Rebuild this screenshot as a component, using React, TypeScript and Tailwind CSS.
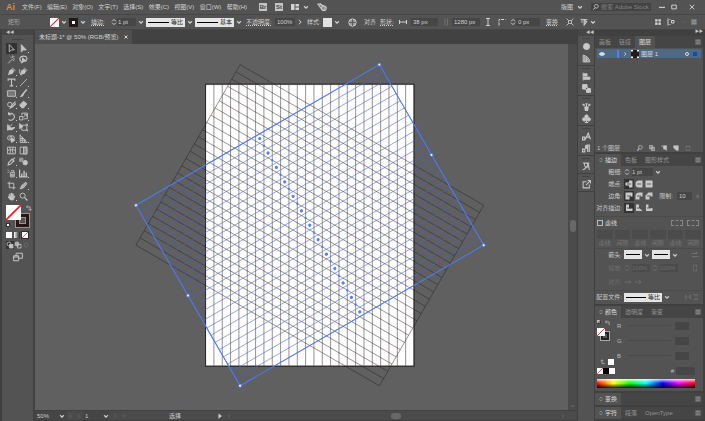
import { useState, type ReactNode } from 'react'

const menus = ['文件(F)', '编辑(E)', '对象(O)', '文字(T)', '选择(S)', '效果(C)', '视图(V)', '窗口(W)', '帮助(H)']

function Icon({ children, className = 'w-2.5 h-2.5' }: { children: ReactNode; className?: string }) {
  return (
    <svg viewBox="0 0 16 16" className={`shrink-0 ${className}`} fill="none" stroke="currentColor" strokeWidth={1.6} aria-hidden="true">
      {children}
    </svg>
  )
}

function Chevron({ className = 'w-1.5 h-1.5' }: { className?: string }) {
  return <Icon className={className}><path d="M3 6l5 5 5-5" strokeWidth={3.2} /></Icon>
}

function Stepper() {
  return <Icon className="w-1.5 h-2.5"><path d="M3 6l5-5 5 5M3 10l5 5 5-5" strokeWidth={2.4} /></Icon>
}

function Burger() {
  return (
    <button aria-label="面板菜单" className="ml-auto mr-0.5 text-[#bdbdbd]">
      <Icon className="w-1.5 h-1.5"><path d="M1 3h14M1 8h14M1 13h14" strokeWidth={2} /></Icon>
    </button>
  )
}

function NoneSwatch({ className }: { className: string }) {
  return (
    <svg viewBox="0 0 16 16" className={`shrink-0 bg-white ${className}`} aria-hidden="true">
      <path d="M0 16L16 0" stroke="#f01820" strokeWidth={1.8} />
    </svg>
  )
}

function LineSelect({ label, value, className }: { label: string; value?: string; className: string }) {
  return (
    <label className="flex items-center gap-0.5 shrink-0">
      <span className={`flex items-center h-[9px] px-0.5 bg-[#e4e4e4] text-[#222] ${className}`}>
        <span className="flex-1 h-px bg-black" />
        <select aria-label={label} className={value ? 'w-3.5 pl-0.5 appearance-none outline-none' : 'w-0 appearance-none outline-none'}>
          <option>{value}</option>
        </select>
      </span>
      <Chevron />
    </label>
  )
}

/* Toolbar glyphs, two columns */
const pen = <><path d="M2 14l2-8 5-3 4 4-3 5z" fill="currentColor" stroke="none" /><path d="M9 1l6 6M2 14l5-5" /></>
const toolGroups: { name: string; more?: boolean; icon: ReactNode }[][] = [
  [
    { name: '选择', icon: <path d="M4 1v13l3.6-3.4H13z" /> },
    { name: '直接选择', more: true, icon: <path d="M4 1v13l3.6-3.4H13z" fill="currentColor" /> },
    { name: '魔棒', icon: <path d="M2 15L10 7M10 1v4M14 7h-3M13 2l-2 2M6 3l2 2M13 11l-2-2" /> },
    { name: '套索', icon: <><path d="M5 12C-1 9 1 2 8 2s8 6 3 8" strokeWidth={2} /><path d="M6 5v9l3-3h4zM5 12q-2 1-1 3" fill="currentColor" /></> },
  ],
  [
    { name: '钢笔', more: true, icon: pen },
    { name: '曲率', icon: <>{pen}<path d="M1 4q-1 8 3 11" /></> },
    { name: '文字', more: true, icon: <path d="M2 5V2h12v3M8 2v12M5 14h6" strokeWidth={2} /> },
    { name: '直线段', more: true, icon: <path d="M2 14L14 2" /> },
    { name: '矩形', more: true, icon: <path d="M1 3h14v10H1z" fill="#777" /> },
    { name: '画笔', more: true, icon: <><path d="M14 1L7 9" strokeWidth={2.6} /><path d="M7 8q-3 0-3 3l-3 3q6 1 8-4z" fill="currentColor" stroke="none" /></> },
    { name: 'Shaper', more: true, icon: <><circle cx="5" cy="8" r="4" /><path d="M15 3L8 10l-2 4 4-2 6-6" strokeWidth={2} /></> },
    { name: '橡皮擦', more: true, icon: <path d="M1 9l7-7 6 5-6 7H5z" fill="currentColor" /> },
  ],
  [
    { name: '旋转', more: true, icon: <path d="M3 4a6 6 0 1 1 0 9M3 0v5h5" strokeWidth={1.8} /> },
    { name: '比例缩放', more: true, icon: <path d="M1 8h6v6H1zM5 6V2h10v10H9M8 9l5-5M9 4h4v4" /> },
    { name: '宽度', more: true, icon: <><path d="M1 3v10l4-5 3 3 6-3M1 3l5 3 3-4" /><path d="M2 5l5 4 7-1-5 4H2z" fill="currentColor" /></> },
    { name: '自由变换', icon: <><path d="M5 4h9v9H5zM12 2h3v3M12 12h3v3" /><path d="M1 1v9l6-4z" fill="currentColor" /></> },
    { name: '形状生成器', more: true, icon: <><circle cx="5" cy="7" r="4" /><circle cx="9" cy="7" r="4" /><path d="M8 7v8l6-4z" fill="currentColor" /></> },
    { name: '透视网格', more: true, icon: <path d="M2 1v14h12L2 2M6 5v10M10 9v6M2 8h7M2 11h10" /> },
  ],
  [
    { name: '网格', icon: <path d="M1 2h14v12H1zM1 8q7-4 14 0M5 2q3 6 0 12M11 2q-3 6 0 12" /> },
    { name: '渐变', icon: <><path d="M2 2h12v12H2z" /><path d="M8 2h6v12H8z" fill="#8f8f8f" /></> },
    { name: '吸管', more: true, icon: <path d="M2 14l1-4 6-6 3 3-6 6zM8 3l5 5M10 5l4-4" strokeWidth={2} /> },
    { name: '混合', icon: <><circle cx="11" cy="10" r="4" fill="currentColor" /><path d="M1 2h6v6H1z" fill="#999" stroke="#999" /></> },
  ],
  [
    { name: '符号喷枪', more: true, icon: <path d="M6 6h7v8H6zM7 3h5v3M1 2h2M4 4h1M1 6h2M8 9h3v3H8z" /> },
    { name: '柱形图', more: true, icon: <path d="M1 1v13h14M5 14V8M9 14V3M13 14V6" strokeWidth={2.4} /> },
  ],
  [
    { name: '画板', icon: <path d="M4 1v11h11M1 4h11v11" /> },
    { name: '切片', more: true, icon: <path d="M2 14l3-6 7-6 2 3-6 7zM5 8l4 4" fill="#aaa" /> },
    { name: '抓手', more: true, icon: <path d="M4 8V4h1v4h2V2h1v6h2V3h1v6l3-2-3 7H6L2 9z" fill="currentColor" /> },
    { name: '缩放', icon: <><circle cx="6.5" cy="6.5" r="4.5" /><path d="M10 10l5 5" strokeWidth={2.2} /></> },
  ],
]

const dockGroups: { name: string; icon: ReactNode }[][] = [
  [
    { name: '颜色参考', icon: <circle cx="8" cy="8" r="5.5" fill="currentColor" /> },
    { name: '色板', icon: <path d="M2 2v12h12Q12 4 2 2M5 4v10M8 6v8M5 14L12 8" fill="#8b8b8b" /> },
  ],
  [
    { name: '对齐', icon: <><path d="M2 1v14" /><path d="M3 3h6v4H3zM3 9h11v4H3z" fill="currentColor" /></> },
    { name: '路径查找器', icon: <><path d="M1 1h8v8H1zM8 8h7v7H8z" fill="currentColor" /><path d="M6 6h4v4H6z" fill="#535353" /></> },
  ],
  [
    { name: '画笔', icon: <path d="M5 9h6l-1 6H6zM8 9V3M4 7L2 3M12 7l2-4M6 3h4M1 5h4M11 5h4" fill="currentColor" strokeWidth={2} /> },
    { name: '符号', icon: <><circle cx="8" cy="4.5" r="3" fill="currentColor" /><circle cx="4" cy="9.5" r="3" fill="currentColor" /><circle cx="12" cy="9.5" r="3" fill="currentColor" /><path d="M8 8v7M5 15h6" strokeWidth={2} /></> },
  ],
  [
    { name: '字符样式', icon: <path d="M6 13L11 2l4 11M8 9h6M1 9h4v5H1z" strokeWidth={2} /> },
    { name: '段落样式', icon: <><path d="M14 2H9a3 3 0 0 0 0 6h1v6M13 2v12M1 9h4v5H1z" strokeWidth={2} /><circle cx="9" cy="5" r="2" fill="currentColor" /></> },
  ],
  [{ name: '字形', icon: <path d="M2 2h11M1 14Q9 12 11 2l2 12M5 2Q3 6 6 9h7" strokeWidth={1.8} /> }],
  [{ name: '导出', icon: <path d="M8 3H2v11h11V8M7 9l7-7M10 1h5v5" strokeWidth={1.8} /> }],
]

function MenuBar() {
  return (
    <header className="flex items-center h-[15px] shrink-0 bg-[#535353] border-b border-[#464646] text-[#d2d2d2]">
      <span className="w-[22px] pl-1.5 text-[9px] leading-3 font-bold text-[#d68b52]">Ai</span>
      <nav className="flex w-[225px] justify-between">
        {menus.map(m => <button key={m}>{m}</button>)}
      </nav>
      <div className="flex items-center gap-2 ml-3">
        <button className="w-2 h-2 bg-[#c4c4c4] text-[#444] leading-2 font-bold">Br</button>
        <button className="w-2 h-2 bg-[#c4c4c4] text-[#444] leading-2 font-bold">St</button>
        <button aria-label="排列文档" className="flex items-center gap-1">
          <Icon className="w-2 h-2"><path d="M0 2h7v12H0zM9 2h7v5H9zM9 9h7v5H9z" fill="currentColor" stroke="none" /></Icon>
          <Chevron />
        </button>
        <button aria-label="GPU 性能">
          <Icon><path d="M1 3l6 1 7 5-4 5-4-4zM5 2l3 4" fill="#888" /><circle cx="11" cy="10" r="4" /></Icon>
        </button>
      </div>
      <div className="flex items-center ml-auto">
        <button className="flex items-center gap-1 mr-2">版图 <Chevron /></button>
        <label className="flex items-center gap-0.5 w-[60px] h-2 px-0.5 bg-[#434343]">
          <Icon className="w-1.5 h-1.5"><circle cx="9" cy="6" r="5" strokeWidth={2} /><path d="M5 10l-4 5" strokeWidth={2.5} /></Icon>
          <input aria-label="搜索" placeholder="搜索 Adobe Stock" className="w-full min-w-0 outline-none placeholder:text-[#838383]" />
        </label>
        <button aria-label="最小化" className="ml-2 w-2"><Icon className="w-1.5 h-1.5"><path d="M0 9h16" strokeWidth={3} /></Icon></button>
        <button aria-label="最大化" className="ml-1 w-2"><Icon className="w-1.5 h-1.5"><path d="M2 3h12v10H2z" strokeWidth={2.6} /></Icon></button>
        <button aria-label="关闭" className="mx-2.5 w-1.5"><Icon className="w-1.5 h-1.5"><path d="M2 2l12 12M14 2L2 14" strokeWidth={2.4} /></Icon></button>
      </div>
    </header>
  )
}

function ControlBar() {
  const field = 'h-2 min-w-0 bg-[#464646] outline-none px-0.5'
  return (
    <section aria-label="控制" className="flex items-center h-[15px] shrink-0 bg-[#535353] border-b border-[#464646] text-[#d2d2d2] whitespace-nowrap">
      <span className="w-[50px] pl-2 text-[#a5a5a5]">矩形</span>
      <button aria-label="填色" className="flex items-center gap-0.5 w-[19px]"><NoneSwatch className="w-[9px] h-[9px]" /><Chevron /></button>
      <button aria-label="描边颜色" className="flex items-center gap-0.5 w-[22px]">
        <span className="w-[9px] h-[9px] border-2 border-[#241817] bg-[#241817] p-px"><span className="block w-[3px] h-[3px] bg-white" /></span>
        <Chevron />
      </button>
      <label className="flex items-center w-[55px]">
        <span className="w-[20px] underline decoration-dotted">描边:</span>
        <Stepper />
        <select aria-label="描边粗细" className="h-2 w-[19px] pl-px bg-[#464646] appearance-none outline-none"><option>1 pt</option></select>
        <span className="pl-0.5"><Chevron /></span>
      </label>
      <div className="flex w-[100px] justify-between pr-1">
        <LineSelect label="变量宽度" value="等比" className="w-[39px]" />
        <LineSelect label="画笔定义" value="基本" className="w-[39px]" />
      </div>
      <label className="flex items-center w-[61px] gap-0.5">
        <span className="w-[27px] underline decoration-dotted">不透明度:</span>
        <input defaultValue="100%" className={`${field} w-[20px]`} />
        <Icon className="w-1.5 h-1.5"><path d="M5 2l6 6-6 6" strokeWidth={2.6} /></Icon>
      </label>
      <button className="flex items-center gap-0.5 w-[41px]">样式: <span className="w-[9px] h-[9px] bg-[#e2e2e2]" /><Chevron /></button>
      <button aria-label="重新着色" className="w-[16px]"><Icon className="w-[9px] h-[9px]"><circle cx="8" cy="8" r="6.5" fill="#999" /><path d="M8 2v12M2 8h12" stroke="#555" /></Icon></button>
      <button className="w-[16px] text-left">对齐</button>
      <label className="flex items-center gap-1 w-[62px]">
        <span className="w-[15px] underline decoration-dotted">形状:</span>
        <Icon className="w-2 h-2"><path d="M1 4v8M15 4v8M2 8h12" strokeWidth={2} /></Icon>
        <input aria-label="宽" defaultValue="38 px" className={`${field} w-[27px]`} />
      </label>
      <button aria-label="约束宽高" className="w-[10px] text-[#777]"><Icon className="w-2 h-2"><path d="M6 1v14M11 1v14" /></Icon></button>
      <input aria-label="高" defaultValue="1280 px" className={`${field} w-[28px]`} />
      <Icon className="w-2 h-2 ml-1"><path d="M4 1h8M4 15h8M8 1v14" strokeWidth={2} /></Icon>
      <Icon className="w-2 h-2 ml-1.5"><path d="M2 15V3h13" strokeWidth={2} strokeDasharray="6 2" /></Icon>
      <span className="ml-1"><Stepper /></span>
      <input aria-label="圆角半径" defaultValue="0 px" className={`${field} w-[24px] mr-1.5`} />
      <button className="underline decoration-dotted">变换</button>
      <button aria-label="隔离" className="ml-2"><Icon className="w-2 h-2"><path d="M5 5h6v6H5zM1 1l4 4M15 1l-4 4M1 15l4-4M15 15l-4-4" /></Icon></button>
      <button aria-label="选择类似对象" className="flex items-center gap-0.5 ml-1.5"><Icon className="w-2 h-2"><path d="M1 3h14M4 3v7M8 3v12l6-8z" fill="#aaa" /></Icon><Chevron /></button>
      <div className="flex items-center ml-auto gap-1.5 pr-2">
        <Icon className="w-1.5 h-1.5"><path d="M1 1h5v5H1zM10 1h5v5h-5zM1 10h5v5H1zM10 10h5v5h-5z" fill="currentColor" /></Icon>
        <Icon className="w-2 h-2"><path d="M2 1v14M5 3h2M5 13h2M9 5h5v5H9z" strokeWidth={2} /></Icon>
        <Icon className="w-1 h-1"><path d="M2 5l6 6 6-6" stroke="#777" /></Icon>
        <Icon className="w-1.5 h-1.5"><path d="M1 3h14M1 8h14M1 13h14" strokeWidth={2} /></Icon>
      </div>
    </section>
  )
}

function Toolbar() {
  const [tool, setTool] = useState('选择')
  return (
    <aside aria-label="工具" className="flex flex-col w-[33px] shrink-0 bg-[#535353] border-x border-[#404040] text-[#c4c4c4]">
      <div className="h-[5px] bg-[#464646] pl-1 text-[4px] leading-[5px]">◀◀</div>
      <div className="h-2 pt-1 px-2.5"><div className="h-px bg-[#444]" /></div>
      <div className="flex flex-col gap-px">
        {toolGroups.map((group, i) => (
          <div key={i} className="grid grid-cols-2 px-[3px]">
            {group.map(t => (
              <button
                key={t.name}
                aria-label={t.name}
                onClick={() => setTool(t.name)}
                className={`relative flex items-center justify-center h-[11px] mx-px ${tool === t.name ? 'bg-[#333]' : ''}`}
              >
                <Icon className="w-[9px] h-[9px]">{t.icon}</Icon>
                {t.more && <span className="absolute right-0 bottom-px w-px h-px bg-[#ccc]" />}
              </button>
            ))}
          </div>
        ))}
      </div>
      <div className="relative h-6 mt-[3px] mx-1">
        <div className="absolute left-[9px] top-2 w-[15px] h-[15px] border border-[#a48f89] bg-[#231815] p-[3px]"><div className="h-full border border-[#a48f89] bg-[#535353]" /></div>
        <NoneSwatch className="absolute left-0 top-0 w-[15px] h-[15px]" />
        <Icon className="absolute left-5 top-0 w-1.5 h-1.5"><path d="M2 5h9v9M5 1L1 5l4 4M8 11l3 4 4-4" strokeWidth={2} /></Icon>
        <span className="absolute left-0 top-[18px] w-1 h-1 bg-white border border-[#333]" />
      </div>
      <div className="flex items-center justify-between h-[9px] px-1 mt-px">
        <button aria-label="颜色" className="w-1.5 h-1.5 bg-white" />
        <button aria-label="渐变" className="w-1.5 h-1.5 bg-linear-to-r from-white to-[#222]" />
        <button aria-label="无" className="bg-[#2d2d2d] p-px"><NoneSwatch className="w-1.5 h-1.5" /></button>
      </div>
      <div className="flex items-center justify-between h-2 px-1 mt-0.5">
        <button aria-label="正常绘图" className="bg-[#333]"><Icon className="w-2 h-2"><circle cx="6" cy="6" r="4" /><path d="M7 7h7v7H7z" fill="currentColor" /></Icon></button>
        <button aria-label="背面绘图"><Icon className="w-2 h-2"><circle cx="6" cy="6" r="4" fill="#aaa" /><path d="M7 7h7v7H7z" /></Icon></button>
        <button aria-label="内部绘图" className="text-[#6c6c6c]"><Icon className="w-2 h-2"><circle cx="8" cy="8" r="4" /></Icon></button>
      </div>
      <button aria-label="更改屏幕模式" className="self-center mt-[3px]"><Icon><path d="M1 6h8v8H1zM5 6V2h10v8H9M1 8h8" /></Icon></button>
    </aside>
  )
}

/* 38x1280 stripes repeated over an artboard of 209x282, centred on 0,0 */
const stripes = Array.from({ length: 26 }, (_, i) => -104.5 + i * 8.36)

function Stripes({ stroke, opacity }: { stroke: string; opacity: number }) {
  return (
    <g stroke={stroke} strokeOpacity={opacity} strokeWidth={0.8} fill="none">
      {stripes.map(x => <path key={x} d={`M${x} -141V141`} />)}
      <path d="M-104.5 -141H104.5M-104.5 141H104.5" />
    </g>
  )
}

function Artwork() {
  const handles = [[-104.5, -141], [104.5, -141], [-104.5, 141], [104.5, 141], [0, -141], [0, 141]]
  return (
    <svg viewBox="35 43 533 367" className="w-full h-full" role="img" aria-label="画板 1">
      <g transform="translate(309.8 224.7)">
        <rect x={-104.5} y={-141.5} width={209} height={283} fill="#fff" stroke="#222" strokeWidth={1} />
        <Stripes stroke="#322d2b" opacity={0.65} />
        <g transform="rotate(-60)"><Stripes stroke="#2a221f" opacity={0.55} /></g>
        <g transform="rotate(60)">
          <Stripes stroke="#4563cc" opacity={0.65} />
          <rect x={-104.5} y={-141} width={209} height={282} fill="none" stroke="#4d7cf5" strokeWidth={1} />
          {stripes.slice(0, -1).map((x, i) => (
            <circle key={x} cx={x + 4.18} cy={0} r={i % 2 ? 1.2 : 1.6} fill="#4b80ff" />
          ))}
          {handles.map(([x, y]) => (
            <circle key={`${x},${y}`} cx={x} cy={y} r={1.4} fill="#fff" stroke="#4d7cf5" strokeWidth={0.8} />
          ))}
        </g>
      </g>
    </svg>
  )
}

function Document() {
  return (
    <main className="flex flex-col flex-1 min-w-0 pl-px bg-[#424242]">
      <div className="flex h-[14px] shrink-0">
        <button className="flex items-center gap-1.5 px-1 h-full bg-[#4f4f4f] text-[#d5d5d5] whitespace-nowrap">
          未标题-1* @ 50% (RGB/预览)
          <Icon className="w-1 h-1"><path d="M2 2l12 12M14 2L2 14" strokeWidth={4} /></Icon>
        </button>
      </div>
      <div className="flex flex-1 min-h-0">
        <div className="flex-1 min-w-0 bg-[#606060]"><Artwork /></div>
        <div className="flex flex-col items-center w-[9px] bg-[#4b4b4b]">
          <div className="flex-1" />
          <div className="w-1.5 h-3 rounded-full bg-[#686868]" />
          <div className="flex-1 flex items-end pb-0.5 text-[#888]"><Chevron className="w-1 h-1" /></div>
        </div>
      </div>
      <footer className="flex items-center h-[11px] shrink-0 bg-[#4b4b4b] border-y border-[#404040] text-[#ccc]">
        <label className="flex items-center w-[32px] h-full pl-0.5 bg-[#454545]">
          <select aria-label="缩放" className="w-[22px] appearance-none outline-none"><option>50%</option></select><Chevron />
        </label>
        <span className="flex gap-1 px-0.5 text-[#777]"><Icon className="w-1 h-1"><path d="M2 1v14M14 1L6 8l8 7" /></Icon><Icon className="w-1 h-1"><path d="M12 1L4 8l8 7" /></Icon></span>
        <label className="flex items-center w-[26px] h-full pl-0.5 bg-[#454545]">
          <select aria-label="画板" className="w-[18px] appearance-none outline-none"><option>1</option></select><Chevron />
        </label>
        <span className="flex gap-1 px-1 text-[#777]"><Icon className="w-1 h-1"><path d="M4 1l8 7-8 7" /></Icon><Icon className="w-1 h-1"><path d="M14 1v14M2 1l8 7-8 7" /></Icon></span>
        <span className="pl-10">选择</span>
        <span className="flex items-center gap-1 pl-9"><Icon className="w-1.5 h-1.5"><path d="M4 1l9 7-9 7z" fill="currentColor" stroke="none" /></Icon><Icon className="w-1 h-1"><path d="M12 1L4 8l8 7" stroke="#888" /></Icon></span>
        <div className="flex flex-1 justify-center"><div className="w-2.5 h-1.5 rounded-full bg-[#686868]" /></div>
        <Icon className="w-1 h-1 mr-3"><path d="M4 1l8 7-8 7" stroke="#888" /></Icon>
      </footer>
    </main>
  )
}

function Dock() {
  return (
    <aside aria-label="面板图标" className="flex flex-col w-[18px] shrink-0 bg-[#535353] border-x border-[#404040] text-[#c8c8c8]">
      <div className="h-1.5 bg-[#464646] text-right text-[4px] leading-[6px]">◀◀</div>
      {dockGroups.map((g, i) => (
        <div key={i} className="flex flex-col items-center py-0.5 gap-[3px] border-b border-[#404040]">
          <div className="w-2 h-px bg-[#444]" />
          {g.map(d => <button key={d.name} aria-label={d.name}><Icon className="w-[9px] h-[9px]">{d.icon}</Icon></button>)}
        </div>
      ))}
    </aside>
  )
}

function Tabs({ items, active = 0, arrow = true }: { items: string[]; active?: number; arrow?: boolean }) {
  return (
    <div role="tablist" className="flex items-center h-3 shrink-0 bg-[#454545] text-[#949494]">
      {items.map((t, i) => (
        <button key={t} role="tab" aria-selected={i === active} className={`flex items-center gap-0.5 h-full px-1 ${i === active ? 'bg-[#535353] text-[#dedede]' : ''}`}>
          {arrow && i === 0 && <Icon className="w-1 h-1.5"><path d="M3 6l5-5 5 5M3 10l5 5 5-5" strokeWidth={2} /></Icon>}
          {t}
        </button>
      ))}
      <Burger />
    </div>
  )
}

function LayersPanel() {
  return (
    <section className="flex flex-col flex-1 min-h-0 bg-[#535353]">
      <Tabs items={['画板', '链接', '图层']} active={2} arrow={false} />
      <div className="px-0.5 pt-px">
        <div className="flex items-center h-[9px] bg-[#4d6984] text-[#dcdcdc]">
          <button aria-label="切换可视性" className="w-5 pl-0.5"><Icon className="w-1.5 h-1.5"><path d="M0 8q8-9 16 0q-8 9-16 0z" fill="currentColor" /></Icon></button>
          <span className="w-0.5 h-2 bg-[#4b80ff]" />
          <Icon className="w-1 h-1 mx-1"><path d="M5 1l7 7-7 7" strokeWidth={3} /></Icon>
          <Icon className="w-2 h-2 mr-0.5"><path d="M0 0h16v16H0z" fill="#fff" stroke="none" /><path d="M4 0h8v3h4v10h-4v3H4v-3H0V3h4z" fill="#241a17" stroke="none" /></Icon>
          图层 1
          <span className="ml-auto w-1 h-1 rounded-full border border-current" />
          <span className="mx-1 w-1 h-1 bg-[#1546c8]" />
        </div>
      </div>
      <div className="flex items-center justify-end gap-1.5 mt-auto h-[9px] pl-0.5 pr-3 text-[#c4c4c4]">
        <span className="mr-auto">1 个图层</span>
        <button aria-label="定位对象"><Icon className="w-1.5 h-1.5"><circle cx="9" cy="6" r="5" strokeWidth={2} /><path d="M5 10l-4 5" strokeWidth={3} /></Icon></button>
        <button aria-label="剪切蒙版"><Icon className="w-1.5 h-1.5"><path d="M1 1h9v9H1zM6 6h9v9H6z" fill="#888" /></Icon></button>
        <button aria-label="新建子图层"><Icon className="w-1.5 h-1.5"><path d="M0 3h6M6 2h9v12l-4-3H7z" fill="currentColor" /></Icon></button>
        <button aria-label="新建图层"><Icon className="w-1.5 h-1.5"><path d="M2 2h12v12H9L2 8z" fill="currentColor" /></Icon></button>
        <button aria-label="删除" className="text-[#777]"><Icon className="w-1.5 h-1.5"><path d="M3 4h10v11H3zM1 4h14" /></Icon></button>
      </div>
    </section>
  )
}

const caps = [
  <path key="a" d="M8 1h7v14H8v-4H1V5h7z" fill="currentColor" stroke="none" />,
  <path key="b" d="M15 1H8a7 7 0 0 0 0 14h7z" fill="currentColor" stroke="none" />,
  <path key="c" d="M1 1h14v14H1z" fill="currentColor" stroke="none" />,
]
const corners = [
  <path key="a" d="M1 15V1h14v8H9v6z" fill="currentColor" stroke="none" />,
  <path key="b" d="M1 15V9q0-8 8-8h6v8H9v6z" fill="currentColor" stroke="none" />,
  <path key="c" d="M1 15V7l6-6h8v8H9v6z" fill="currentColor" stroke="none" />,
]
const aligns = [
  <path key="a" d="M2 1v13h13V9H8V1z" fill="currentColor" stroke="none" />,
  <path key="b" d="M2 1v13h13L8 7V1z" fill="currentColor" stroke="none" />,
  <path key="c" d="M2 1v13h13V8H7V1z" fill="currentColor" stroke="none" />,
]
const joint = <path d="M4 8h8" stroke="#444" strokeWidth={1.6} />

function Choice({ label, icons }: { label: string; icons: ReactNode[] }) {
  const [active, setActive] = useState(0)
  return (
    <div className="flex items-center h-3" role="group" aria-label={label}>
      <span className="w-[29px] pr-0.5 text-right">{label}:</span>
      {icons.map((icon, i) => (
        <button key={i} aria-label={`${label} ${i + 1}`} onClick={() => setActive(i)} className={`p-px ${i === active ? 'bg-[#333]' : ''}`}>
          <Icon className="w-2 h-2">{icon}{joint}</Icon>
        </button>
      ))}
    </div>
  )
}

function StrokePanel() {
  return (
    <section className="shrink-0 pb-px bg-[#535353] text-[#c9c9c9] whitespace-nowrap">
      <Tabs items={['描边', '色板', '图形样式']} />
      <div className="flex items-center h-3 gap-0.5">
        <label htmlFor="weight" className="w-[27px] text-right">粗细:</label>
        <Stepper />
        <select id="weight" className="w-[21px] h-2 bg-[#464646] appearance-none outline-none"><option>1 pt</option></select>
        <Chevron />
      </div>
      <Choice label="端点" icons={caps} />
      <div className="flex items-center">
        <Choice label="边角" icons={corners} />
        <label className="flex items-center gap-1 ml-auto pr-1">限制:<input defaultValue="10" className="w-[15px] h-2 px-0.5 bg-[#464646] outline-none" /><span className="text-[#888]">x</span></label>
      </div>
      <Choice label="对齐描边" icons={aligns} />
      <div className="flex items-center h-3 mt-0.5 border-t border-[#4c4c4c] pl-0.5 pr-1">
        <label className="flex items-center gap-0.5 text-[#ddd]">
          <input type="checkbox" className="w-1.5 h-1.5 appearance-none border border-[#bbb] checked:bg-[#bbb]" />虚线
        </label>
        <span className="flex gap-1 ml-auto text-[#868686]">
          <button aria-label="保留虚线长度" className="w-3 h-1.5 border border-dashed border-current" />
          <button aria-label="对齐虚线" className="w-3 h-1.5 border border-dashed border-current" />
        </span>
      </div>
      <div className="grid grid-cols-6 gap-x-0.5 px-0.5 mt-0.5 text-center text-[#777]">
        {['虚线', '间隙', '虚线', '间隙', '虚线', '间隙'].map((t, i) => (
          <label key={i} className="leading-2"><input disabled className="block w-full h-[9px] bg-[#4b4b4b]" />{t}</label>
        ))}
      </div>
      <div className="flex items-center h-3 mt-px gap-0.5 border-t border-[#4c4c4c]">
        <span className="w-[27px] text-right">箭头:</span>
        <LineSelect label="起点箭头" className="w-[18px]" />
        <LineSelect label="终点箭头" className="w-[18px]" />
        <button aria-label="互换箭头" className="ml-auto mr-1 text-[#777]"><Icon className="w-2 h-2"><path d="M1 5h12l-3-3M15 11H3l3 3" /></Icon></button>
      </div>
      <div className="flex items-center h-4 gap-0.5 text-[#6e6e6e]">
        <span className="w-[27px] text-right">缩放:</span>
        <Stepper /><input disabled aria-label="起点缩放" defaultValue="100%" className="w-[18px] h-2 min-w-0 bg-[#4b4b4b]" />
        <Stepper /><input disabled aria-label="终点缩放" defaultValue="100%" className="w-[18px] h-2 min-w-0 bg-[#4b4b4b]" />
        <Icon className="w-2 h-2 ml-auto mr-1"><path d="M5 7V2h6v5M5 9v5h6V9" /></Icon>
      </div>
      <div className="flex items-center h-3 gap-0.5 text-[#6e6e6e]">
        <span className="w-[27px] text-right">对齐:</span>
        <Icon className="w-2 h-2"><path d="M1 8h13M10 4l4 4-4 4" /></Icon>
        <Icon className="w-2 h-2"><path d="M1 8h13M10 4l4 4-4 4" /></Icon>
      </div>
      <div className="flex items-center h-[13px] mt-0.5 gap-0.5 border-t border-[#4c4c4c]">
        <span className="w-[27px] text-right">配置文件:</span>
        <LineSelect label="配置文件" value="等比" className="w-[38px]" />
        <Icon className="w-1.5 h-1.5 ml-auto"><path d="M1 2v12l5-6zM15 2v12l-5-6z" stroke="#777" /></Icon>
        <Icon className="w-1.5 h-1.5 mr-1"><path d="M2 1h12L8 6zM2 15h12l-6-5z" stroke="#777" /></Icon>
      </div>
    </section>
  )
}

function ColorPanel() {
  return (
    <section className="shrink-0 bg-[#535353] text-[#bbb]">
      <Tabs items={['颜色', '透明度', '渐变']} />
      <div className="flex h-[47px]">
        <div className="relative w-[22px] shrink-0">
          <Icon className="absolute left-0.5 top-0.5 w-1 h-1"><path d="M1 1h9v9H1z" fill="#fff" /><path d="M6 6h9v9H6z" stroke="#111" /></Icon>
          <Icon className="absolute left-2.5 top-0.5 w-1.5 h-1.5"><path d="M2 5h9v9M5 1L1 5l4 4" strokeWidth={2} /></Icon>
          <div className="absolute left-1.5 top-3.5 w-2 h-2 border-2 border-[#222] outline-1 outline-[#aaa]" />
          <NoneSwatch className="absolute left-0.5 top-2.5 w-2 h-2" />
          <Icon className="absolute left-1 bottom-0 w-1.5 h-1.5"><path d="M8 2v10h7M4 6l4-4 4 4" strokeWidth={2} /></Icon>
          <div className="absolute left-[13px] bottom-0 w-1.5 h-1.5 bg-white" />
        </div>
        <div className="flex-1 min-w-0 pr-3.5">
          {['R', 'G', 'B'].map(c => (
            <div key={c} className="flex items-center gap-1 h-[15px]">
              <label htmlFor={`channel-${c}`} className="w-1.5 shrink-0">{c}</label>
              <input type="range" aria-label={`${c} 滑块`} className="flex-1 min-w-0 h-px appearance-none bg-[#4b4b4b] [&::-webkit-slider-thumb]:appearance-none" />
              <input id={`channel-${c}`} className="w-3.5 h-2 shrink-0 bg-[#464646]" />
            </div>
          ))}
        </div>
      </div>
      <div className="flex items-center h-3 pl-0.5 pr-2">
        <NoneSwatch className="w-1.5 h-1.5" />
        <span className="w-1.5 h-1.5 bg-black" />
        <span className="w-1.5 h-1.5 bg-white" />
        <label className="flex items-center gap-0.5 ml-auto">#<input className="w-[19px] h-2 bg-[#464646]" /></label>
      </div>
      <div className="pl-0.5 pr-2 pb-[3px] pt-0.5">
        <div className="h-[9px] bg-[linear-gradient(to_bottom,rgba(255,255,255,.85),rgba(255,255,255,0)_45%,rgba(0,0,0,0)_50%,rgba(0,0,0,.9)),linear-gradient(to_right,#f00,#ff0,#0f0,#0ff,#00f,#f0f,#f00)]" />
      </div>
    </section>
  )
}

export default function App() {
  return (
    <div className="flex flex-col h-screen overflow-hidden bg-[#404040] text-[6px] leading-2 font-['Liberation_Sans','Noto_Sans_CJK_SC',sans-serif]">
      <MenuBar />
      <ControlBar />
      <div className="flex flex-1 min-h-0 pl-px">
        <Toolbar />
        <Document />
        <Dock />
        <aside aria-label="面板" className="flex flex-col w-[110px] shrink-0 gap-0.5 pr-0.5 pb-0.5 bg-[#404040]">
          <div className="h-1 text-right text-[4px] leading-1 text-[#c8c8c8]">▶▶</div>
          <LayersPanel />
          <StrokePanel />
          <ColorPanel />
          <Tabs items={['变换']} />
          <Tabs items={['字符', '段落', 'OpenType']} />
        </aside>
      </div>
    </div>
  )
}
